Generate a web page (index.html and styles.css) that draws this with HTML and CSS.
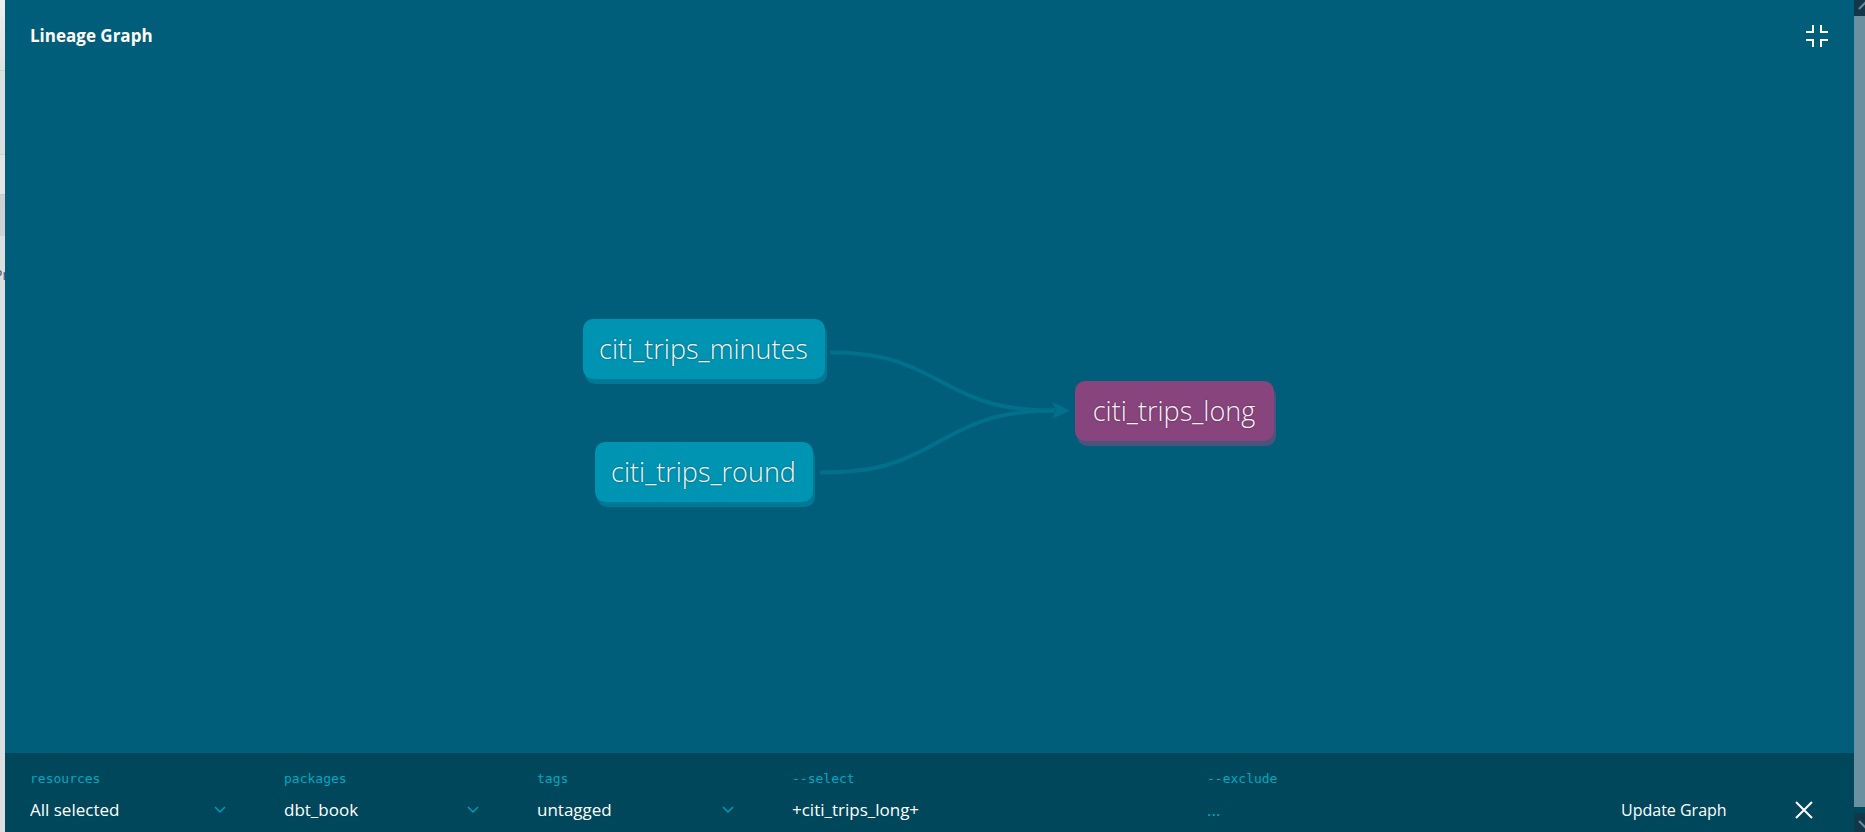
FILE: index.html
```html
<!DOCTYPE html>
<html lang="en">
<head>
<meta charset="utf-8">
<title>Lineage Graph</title>
<link rel="stylesheet" href="styles.css">
</head>
<body>
<div class="app">
  <aside class="backdrop">
    <div class="backdrop-header"></div>
    <div class="backdrop-search"></div>
    <div class="backdrop-field"></div>
    <div class="backdrop-tab"></div>
    <div class="backdrop-nav"><span class="backdrop-text">Pr</span></div>
  </aside>
  <main class="panel">
    <header class="panel-header">
      <h1 class="title">Lineage Graph</h1>
      <button class="icon-button" type="button" aria-label="Exit full screen">
        <svg class="collapse-icon" viewBox="0 0 24 24"><path d="M1 8H8V1M23 8H16V1M1 16H8V23M23 16H16V23"/></svg>
      </button>
    </header>
    <section class="canvas">
      <div class="graph">
        <svg class="edges" viewBox="0 0 694 187">
          <path class="edge" d="M247 33.5C290 33.500 315 39 357 62C395 83 420 91.500 472 91.500"/>
          <path class="edge" d="M237 153.500C290 153.500 315 146 357 122C395 101 420 91.500 472 91.500"/>
          <path class="arrow" d="M469 83L487 91.500L469 100L473 91.500Z"/>
        </svg>
        <div class="node node-minutes">citi_trips_minutes</div>
        <div class="node node-round">citi_trips_round</div>
        <div class="node node-long">citi_trips_long</div>
      </div>
    </section>
    <form class="controls">
      <div class="field">
        <label class="label" for="resources">resources</label>
        <div class="select-wrap">
          <select class="control" id="resources"><option>All selected</option></select>
          <svg class="chevron" viewBox="0 0 12 8"><path d="M1 1L6 6L11 1"/></svg>
        </div>
      </div>
      <div class="field">
        <label class="label" for="packages">packages</label>
        <div class="select-wrap">
          <select class="control" id="packages"><option>dbt_book</option></select>
          <svg class="chevron" viewBox="0 0 12 8"><path d="M1 1L6 6L11 1"/></svg>
        </div>
      </div>
      <div class="field">
        <label class="label" for="tags">tags</label>
        <div class="select-wrap">
          <select class="control" id="tags"><option>untagged</option></select>
          <svg class="chevron" viewBox="0 0 12 8"><path d="M1 1L6 6L11 1"/></svg>
        </div>
      </div>
      <div class="field">
        <label class="label" for="select">--select</label>
        <input class="control" id="select" type="text" value="+citi_trips_long+">
      </div>
      <div class="field">
        <label class="label" for="exclude">--exclude</label>
        <input class="control" id="exclude" type="text" placeholder="...">
      </div>
      <div class="actions">
        <button class="update" type="submit">Update Graph</button>
        <button class="icon-button" type="button" aria-label="Close">
          <svg class="close-icon" viewBox="0 0 18 18"><path d="M1 1L17 17M17 1L1 17"/></svg>
        </button>
      </div>
    </form>
  </main>
  <div class="scrollbar">
    <div class="scroll-button"><svg class="scroll-arrow" viewBox="0 0 16 9"><path d="M1 8L8 1L15 8"/></svg></div>
    <div class="scroll-thumb"></div>
    <div class="scroll-button scroll-button-down"><svg class="scroll-arrow" viewBox="0 0 16 9"><path d="M1 1L8 8L15 1"/></svg></div>
  </div>
</div>
</body>
</html>
```
FILE: styles.css
```css
* { box-sizing: border-box; }
body {
  margin: 0;
  font-family: "Open Sans", "Noto Sans", sans-serif;
  color: #fff;
  background: #005e7a;
}
.app {
  display: grid;
  grid-template-columns: 5px minmax(0, 1fr) 11px;
  height: 100vh;
  overflow: hidden;
}
.backdrop {
  display: flex;
  flex-direction: column;
  overflow: hidden;
  background: #dcdfdf;
}
.backdrop-header { height: 71px; background: linear-gradient(#eee, #e0e0e0); border-bottom: 1px solid #cdd0d0; }
.backdrop-search { height: 84px; border-bottom: 1px solid #d0d3d3; }
.backdrop-field { height: 39px; background: #e4e4e4; }
.backdrop-tab { height: 42px; background: #cfd0d4; border-top: 1px solid #c6c7ca; }
.backdrop-nav { display: flex; padding-top: 29px; }
.backdrop-text { margin-left: -6px; font-size: 14px; line-height: 20px; color: #456; }

.panel { display: flex; flex-direction: column; background: #005e7a; }
.panel-header {
  display: flex;
  align-items: center;
  justify-content: space-between;
  height: 72px;
  padding: 0 25px;
}
.title { margin: 0; font-size: 17px; line-height: 24px; font-weight: 700; }
.icon-button {
  display: flex;
  padding: 0;
  border: 0;
  background: none;
}
.collapse-icon { width: 24px; height: 24px; fill: none; stroke: #fff; stroke-width: 2; }

.canvas { flex: 1; display: flex; align-items: center; justify-content: center; }
.graph { position: relative; width: 694px; height: 187px; }
.edges { width: 100%; height: 100%; }
.edge { fill: none; stroke: #00708b; stroke-width: 4; }
.arrow { fill: #00708b; }
.node {
  position: absolute;
  border-radius: 10px;
  font-size: 27px;
  line-height: 60px;
  font-weight: 300;
  text-align: center;
  white-space: nowrap;
  color: #f4f4f4;
  background: #0094b3;
  box-shadow: 2px 5px #007896;
  text-shadow: 0 0 2px rgba(0, 0, 0, 0.4);
}
.node-minutes { left: 0; top: 0; width: 242px; }
.node-round { left: 12px; top: 123px; width: 218px; }
.node-long { left: 492px; top: 62px; width: 199px; background: #88447d; box-shadow: 2px 5px #4b527c; }

.controls {
  display: grid;
  grid-template-columns: 254fr 253fr 255fr 415fr 414fr 233fr;
  height: 79px;
  padding: 16px 0 8px 25px;
  background: #00475b;
}
.label {
  display: block;
  font-family: "DejaVu Sans Mono", monospace;
  font-size: 13px;
  line-height: 20px;
  color: #00a8c0;
}
.select-wrap { position: relative; margin-right: 58px; }
.control {
  display: block;
  appearance: none;
  width: 100%;
  height: 24px;
  margin: 9px 0 0;
  padding: 0;
  border: 0;
  font-family: inherit;
  font-size: 17px;
  line-height: 24px;
  color: #fff;
  background: transparent;
}
.control::placeholder { color: #00a8c0; opacity: 1; }
.chevron {
  position: absolute;
  right: 0;
  top: 8px;
  width: 12px;
  height: 8px;
  fill: none;
  stroke: #009ab8;
  stroke-width: 1.5;
  pointer-events: none;
}
.actions {
  display: flex;
  align-items: center;
  justify-content: space-between;
  height: 24px;
  margin-top: 29px;
  padding-right: 41px;
}
.update { padding: 0; border: 0; font: inherit; font-size: 16px; line-height: 24px; color: #fff; background: none; white-space: nowrap; }
.close-icon { width: 18px; height: 18px; fill: none; stroke: #fff; stroke-width: 2; }

.scrollbar { display: flex; flex-direction: column; overflow: hidden; background: #00475b; }
.scroll-button { display: flex; align-items: flex-start; height: 16px; padding: 1px 0 0 4px; background: #123749; }
.scroll-button-down { height: 19px; margin-top: 6px; padding-top: 7px; }
.scroll-thumb { flex: 1; background: #6b909f; }
.scroll-arrow { flex: none; width: 16px; height: 9px; fill: none; stroke: #6b8896; stroke-width: 2; }
```
